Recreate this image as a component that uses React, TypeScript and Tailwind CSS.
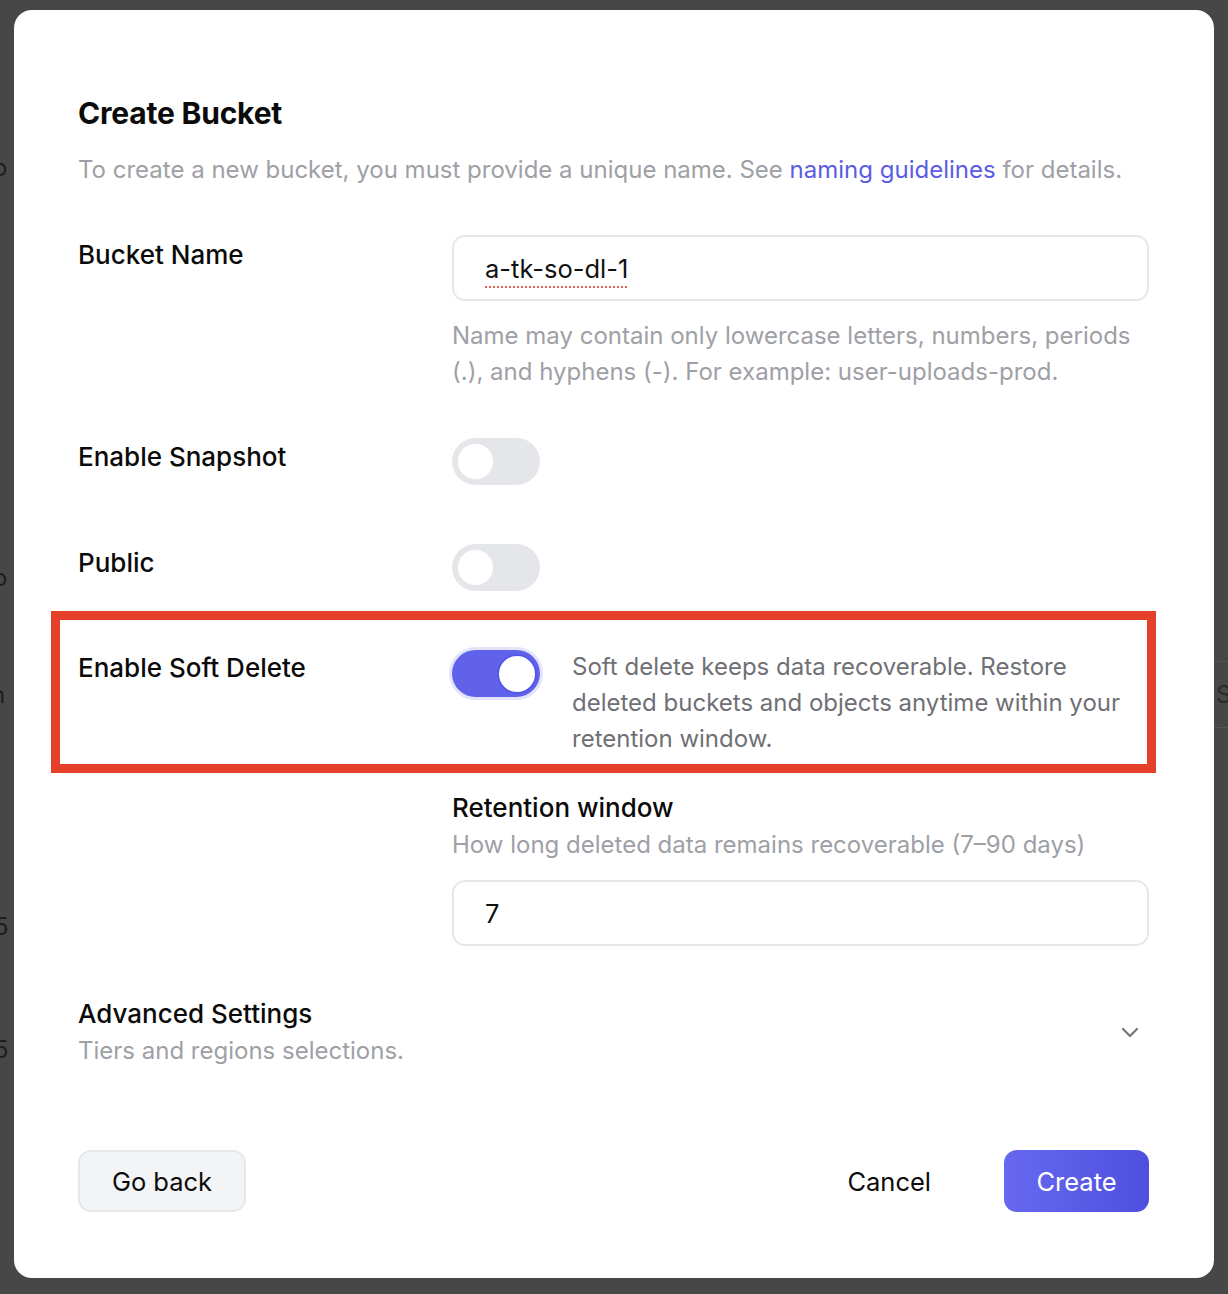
import React from "react";

function Toggle({ on }: { on?: boolean }) {
  if (on) {
    return (
      <div className="w-[88px] h-[47px] rounded-full bg-[#6063ea] ring-[3px] ring-[#e3e4fb] flex items-center justify-end pr-[3px] shrink-0">
        <div className="w-[40px] h-[40px] rounded-full bg-white border-[2px] border-[#5558e6]" />
      </div>
    );
  }
  return (
    <div className="w-[88px] h-[47px] rounded-full bg-[#e4e6ea] flex items-center pl-[5px] shrink-0">
      <div className="w-[37px] h-[37px] rounded-full bg-white border border-[#e6e8ec]" />
    </div>
  );
}

export default function App() {
  return (
    <div
      className="relative w-[1228px] h-[1294px] bg-[#474747] overflow-hidden"
      style={{ fontFamily: "Inter, 'Noto Sans', 'Liberation Sans', sans-serif" }}
    >
      {/* backdrop fragments */}
      <div className="absolute left-[-7px] top-[150px] text-[24px] text-[#1e1e1e]">o</div>
      <div className="absolute left-[-7px] top-[560px] text-[24px] text-[#1e1e1e]">o</div>
      <div className="absolute left-[-9px] top-[677px] text-[24px] text-[#1e1e1e]">n</div>
      <div className="absolute left-[-6px] top-[909px] text-[24px] text-[#1e1e1e]">5</div>
      <div className="absolute left-[-6px] top-[1032px] text-[24px] text-[#1e1e1e]">5</div>
      <div className="absolute left-[1216px] top-[677px] text-[24px] text-[#2a2a2a]">S</div>
      <div className="absolute left-[1214px] top-[661px] w-[20px] h-px bg-[#555]" />
      <div className="absolute left-[1214px] top-[727px] w-[20px] h-px bg-[#555]" />

      <div className="absolute left-[14px] top-[10px] w-[1200px] h-[1268px] bg-white rounded-[18px] pt-[85px] pl-[64px] pr-[65px] flex flex-col">
        <h1 className="text-[30px] leading-[36px] font-bold text-[#0b0b0b] tracking-[-0.2px]">Create Bucket</h1>
        <p className="mt-[21px] text-[24px] leading-[36px] text-[#9ea0a6]">
          To create a new bucket, you must provide a unique name. See{" "}
          <span className="text-[#5a5de4]">naming guidelines</span> for details.
        </p>

        {/* Bucket name */}
        <div className="mt-[47px] flex">
          <div className="w-[374px] shrink-0 pt-[2px] text-[26px] leading-[36px] font-medium text-[#0b0b0b]">Bucket Name</div>
          <div className="flex-1">
            <div className="h-[66px] rounded-[13px] border-[2px] border-[#e6e7ea] flex items-center px-[31px] pt-[3px]">
              <span className="text-[25.5px] text-[#111] underline decoration-dotted decoration-[#e0685a] decoration-[2px] underline-offset-[8px]">
                a-tk-so-dl-1
              </span>
            </div>
            <p className="mt-[17px] text-[24px] leading-[36px] text-[#9ea0a6]">
              Name may contain only lowercase letters, numbers, periods (.), and hyphens (-). For example: user-uploads-prod.
            </p>
          </div>
        </div>

        {/* Snapshot */}
        <div className="mt-[48px] flex">
          <div className="w-[374px] shrink-0 pt-px text-[26px] leading-[36px] font-medium text-[#0b0b0b]">Enable Snapshot</div>
          <Toggle />
        </div>

        {/* Public */}
        <div className="mt-[59px] flex">
          <div className="w-[374px] shrink-0 pt-px text-[26px] leading-[36px] font-medium text-[#0b0b0b]">Public</div>
          <Toggle />
        </div>

        {/* Soft delete */}
        <div className="relative mt-[59px] flex">
          <div className="absolute left-[-27px] right-[-7px] top-[-39px] bottom-[-16px] border-[9px] border-[#e5402a]" />
          <div className="w-[374px] shrink-0 text-[26px] leading-[36px] font-medium text-[#0b0b0b]">Enable Soft Delete</div>
          <Toggle on />
          <p className="ml-[32px] -mt-[1px] text-[24px] leading-[36px] text-[#6f7075]">
            Soft delete keeps data recoverable. Restore deleted buckets and objects anytime within your retention window.
          </p>
        </div>

        {/* Retention */}
        <div className="mt-[33px] ml-[374px]">
          <div className="text-[26px] leading-[36px] font-medium text-[#0b0b0b]">Retention window</div>
          <div className="mt-px text-[24px] leading-[36px] text-[#9ea0a6]">How long deleted data remains recoverable (7–90 days)</div>
          <div className="mt-[17px] h-[66px] rounded-[13px] border-[2px] border-[#e6e7ea] flex items-center px-[31px] pt-[3px] text-[25.5px] text-[#111]">
            7
          </div>
        </div>

        {/* Advanced */}
        <div className="mt-[50px] flex items-center justify-between">
          <div>
            <div className="text-[26px] leading-[36px] font-medium text-[#0b0b0b]">Advanced Settings</div>
            <div className="mt-px text-[24px] leading-[36px] text-[#9ea0a6]">Tiers and regions selections.</div>
          </div>
          <svg width="24" height="24" viewBox="0 0 24 24" fill="none" stroke="#74767c" strokeWidth="2.2" strokeLinecap="round" strokeLinejoin="round" className="mr-[7px] mt-[-2px]">
            <path d="M5 9l7 7 7-7" />
          </svg>
        </div>

        {/* Buttons */}
        <div className="mt-[81px] flex items-center">
          <button className="h-[62px] w-[168px] rounded-[13px] bg-[#f3f4f6] border-[2px] border-[#e7e8eb] text-[25.5px] text-[#0b0b0b] pt-[2px]">
            Go back
          </button>
          <div className="flex-1" />
          <button className="h-[62px] text-[25.5px] text-[#0b0b0b] mr-[73px] pt-[2px]">Cancel</button>
          <button className="h-[62px] w-[145px] rounded-[13px] bg-gradient-to-r from-[#6669ef] to-[#4e4fdf] text-[25.5px] text-white pt-[2px]">
            Create
          </button>
        </div>
      </div>
    </div>
  );
}
